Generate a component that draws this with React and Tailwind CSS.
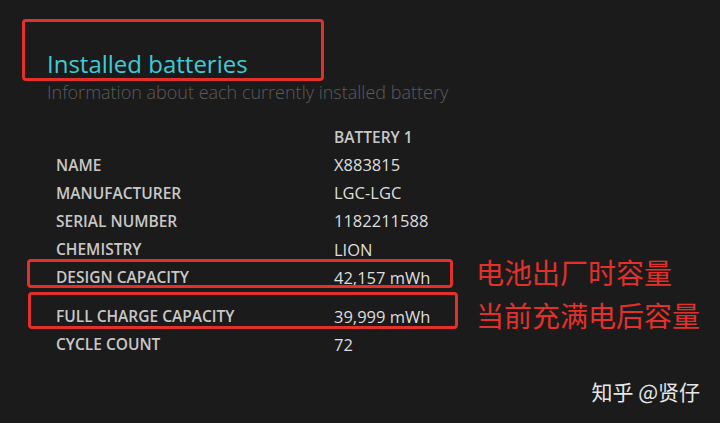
const rows = [
  { label: "NAME", value: "X883815" },
  { label: "MANUFACTURER", value: "LGC-LGC" },
  { label: "SERIAL NUMBER", value: "1182211588" },
  { label: "CHEMISTRY", value: "LION" },
  {
    label: "DESIGN CAPACITY",
    value: "42,157 mWh",
    note: "电池出厂时容量",
    frame: "-left-[29px] -top-[4.5px] h-[29px] w-[426px]",
    noteShift: "-mt-[13px]",
  },
  {
    label: "FULL CHARGE CAPACITY",
    value: "39,999 mWh",
    note: "当前充满电后容量",
    frame: "-left-[28px] -top-[10.5px] h-[37px] w-[430px]",
    noteShift: "-mt-[5px]",
    gap: true,
  },
  { label: "CYCLE COUNT", value: "72" },
];

const cjk = { fontFamily: '"Noto Sans CJK SC", "Noto Sans", sans-serif' };

function Row({ label, value, note, frame, noteShift, gap }) {
  return (
    <div className={`relative flex h-[28.1px] items-center ${gap ? "mt-[10.9px]" : ""}`}>
      {frame && <div className={`absolute rounded-[4px] border-[3px] border-[#e3302a] ${frame}`} />}
      <div className="w-[278px] text-[15.5px] font-semibold text-[#c8c8c8]">{label}</div>
      <div className="w-[142px] text-[16.5px] text-[#dedede]">{value}</div>
      {note && (
        <div className={`whitespace-nowrap text-[28px] leading-[38px] text-[#e3302a] ${noteShift}`} style={cjk}>
          {note}
        </div>
      )}
    </div>
  );
}

export default function App() {
  return (
    <div
      className="flex h-[423px] w-[720px] flex-col overflow-hidden bg-[#1b1b1b]"
      style={{ fontFamily: '"Open Sans", "Noto Sans", sans-serif' }}
    >
      <div className="ml-[22px] mt-[19px] h-[62px] w-[302px] rounded-[4px] border-[3px] border-[#e3302a] pl-[22px] pt-[28px]">
        <h1 className="text-[24px] leading-[28px] text-[#3ecbd8]">Installed batteries</h1>
      </div>
      <p className="pl-[47px] text-[18px] font-light leading-[22px] text-[#5c5c5c]">
        Information about each currently installed battery
      </p>

      <div className="mt-[20.5px] pl-[56px]">
        <div className="flex h-[28.1px] items-center">
          <div className="w-[278px]" />
          <div className="text-[15.5px] font-semibold text-[#c8c8c8]">BATTERY 1</div>
        </div>
        {rows.map((r) => (
          <Row key={r.label} {...r} />
        ))}
      </div>

      <div className="mt-[18px] flex justify-end pr-[20px]">
        <span className="text-[21px] leading-[28px] text-[#e6e6e6]" style={cjk}>
          知乎 @贤仔
        </span>
      </div>
    </div>
  );
}
